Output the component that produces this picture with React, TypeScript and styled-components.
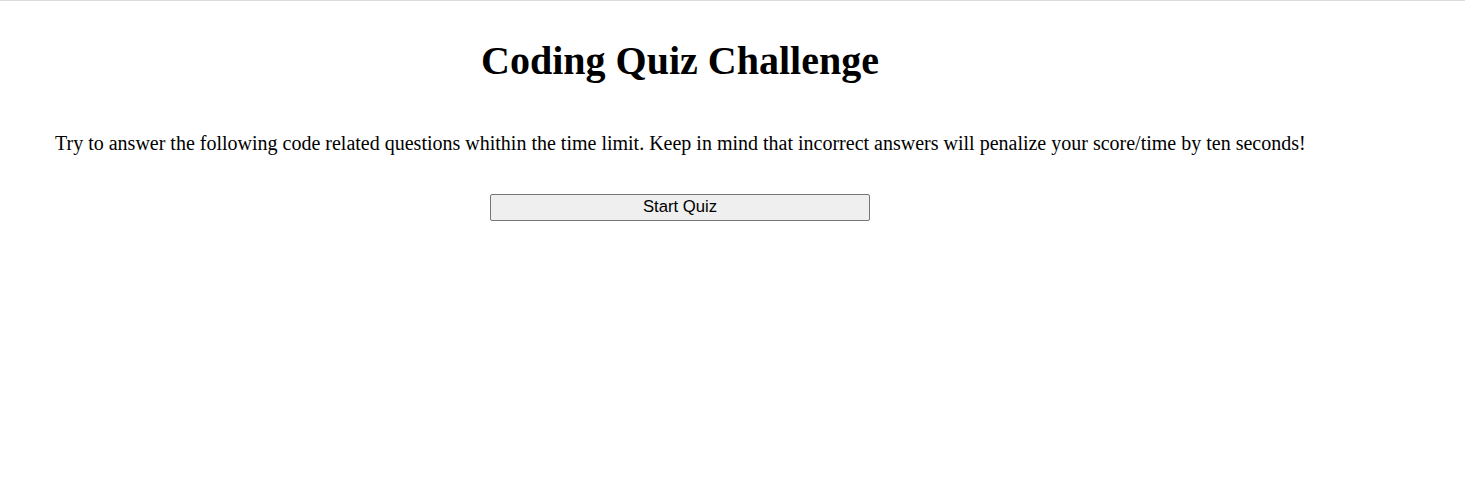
import React from "react";
import styled, { createGlobalStyle } from "styled-components";

const GlobalStyle = createGlobalStyle`
  html, body { margin: 0; padding: 0; background: #ffffff; }
  body {
    font-family: "Liberation Serif", "Times New Roman", serif;
    color: #000000;
    border-top: 1px solid #dcdcdc;
  }
`;

const Page = styled.main`
  width: 1360px;
  display: flex;
  flex-direction: column;
  align-items: center;
  padding-top: 37px;
`;

const Title = styled.h1`
  margin: 0;
  font-family: "Liberation Serif", "Times New Roman", serif;
  font-size: 40px;
  font-weight: bold;
  line-height: 46px;
`;

const Intro = styled.p`
  align-self: stretch;
  margin: 48px 0 0 55px;
  font-size: 20px;
  line-height: 23px;
`;

const StartButton = styled.button`
  margin-top: 39px;
  width: 380px;
  height: 27px;
  padding: 0 6px 2px;
  font-family: "Liberation Sans", Arial, sans-serif;
  font-size: 16.7px;
  line-height: 19px;
  color: #000000;
  background: #efefef;
  border: 1px solid #767676;
  border-radius: 2px;
`;

export default function App() {
  return (
    <>
      <GlobalStyle />
      <Page>
        <Title>Coding Quiz Challenge</Title>
        <Intro>
          Try to answer the following code related questions whithin the time limit. Keep in mind that incorrect answers will penalize your score/time by ten seconds!
        </Intro>
        <StartButton>Start Quiz</StartButton>
      </Page>
    </>
  );
}
